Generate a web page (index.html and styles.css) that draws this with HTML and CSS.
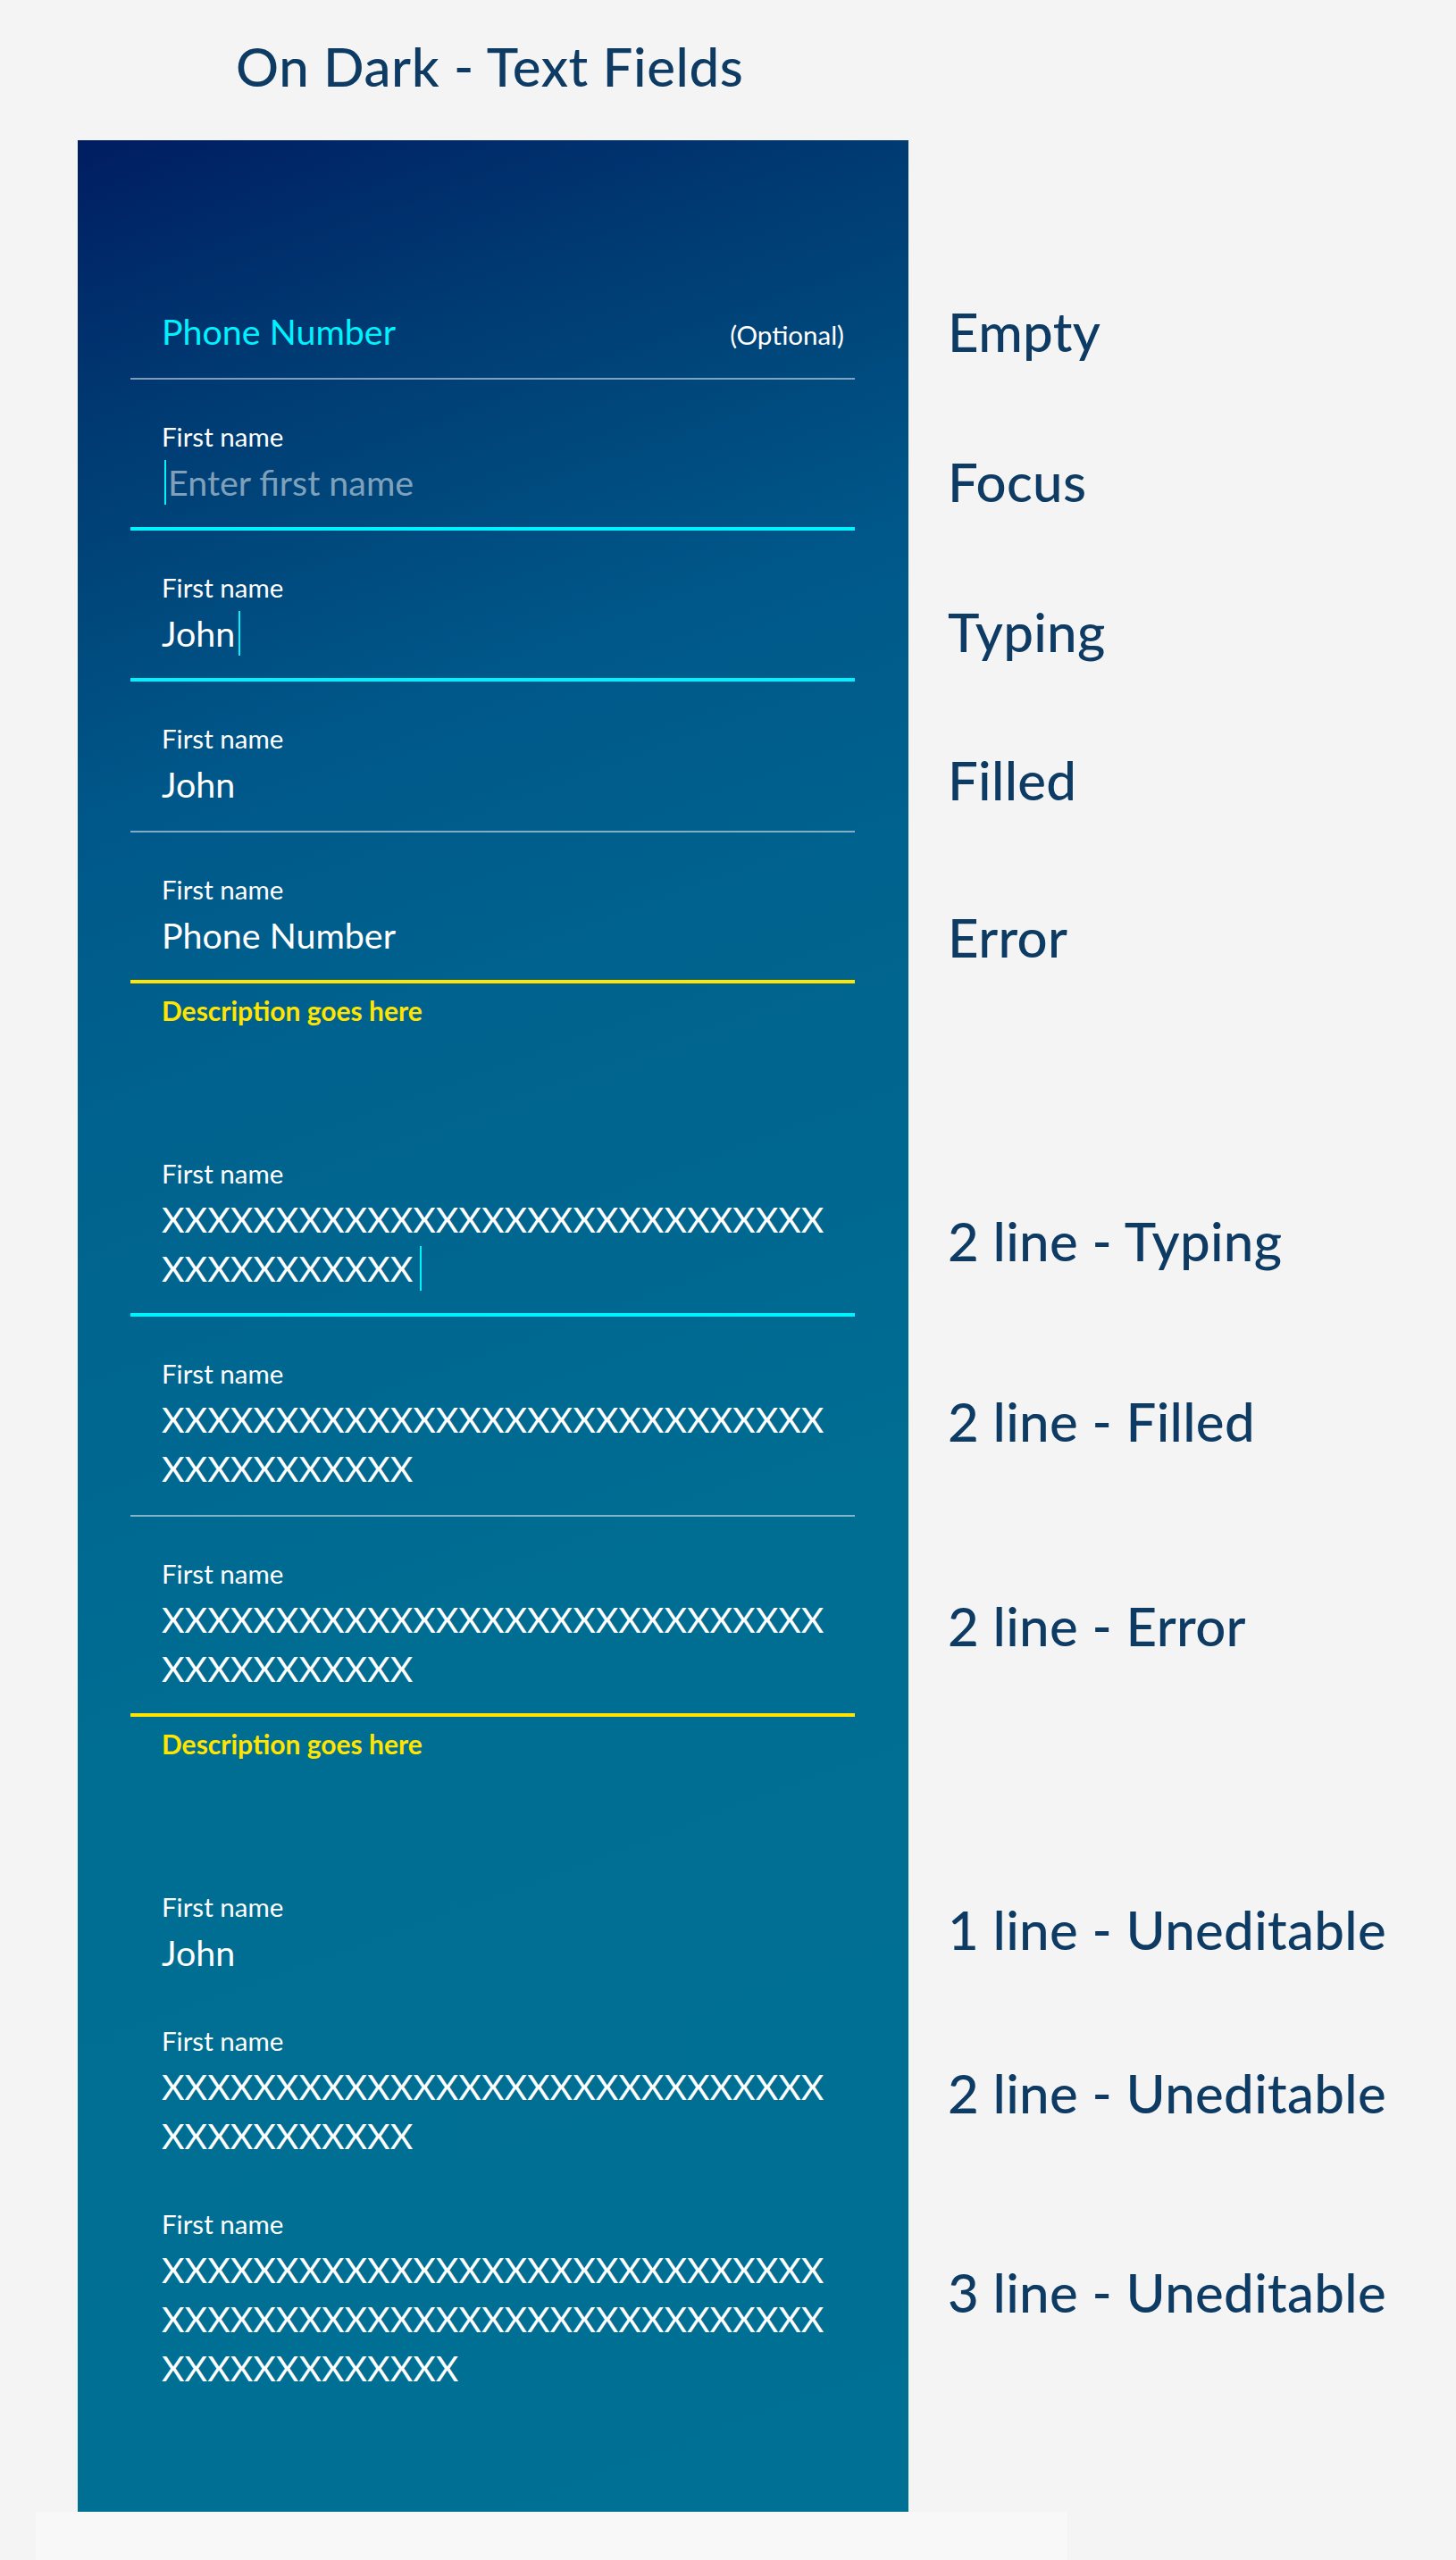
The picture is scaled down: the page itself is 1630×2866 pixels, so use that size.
FILE: index.html
```html
<!DOCTYPE html>
<html lang="en">
<head>
<meta charset="utf-8">
<title>On Dark - Text Fields</title>
<link rel="stylesheet" href="styles.css">
</head>
<body>
<h1 class="title">On Dark - Text Fields</h1>
<div class="board">
  <div class="panel">
    <div class="field field--rest field--empty">
      <div class="field__row">
        <span class="field__value field__value--hint">Phone Number</span>
        <span class="field__optional">(Optional)</span>
      </div>
    </div>

    <div class="field field--active">
      <div class="field__label">First name</div>
      <div class="field__value"><span class="caret caret--lead"></span><span class="field__placeholder">Enter first name</span></div>
    </div>

    <div class="field field--active">
      <div class="field__label">First name</div>
      <div class="field__value">John<span class="caret"></span></div>
    </div>

    <div class="field field--rest">
      <div class="field__label">First name</div>
      <div class="field__value">John</div>
    </div>

    <div class="group">
      <div class="field field--error">
        <div class="field__label">First name</div>
        <div class="field__value">Phone Number</div>
      </div>
      <div class="field__help">Description goes here</div>
    </div>

    <div class="field field--active">
      <div class="field__label">First name</div>
      <div class="field__value">XXXXXXXXXXXXXXXXXXXXXXXXXXXXX<br>XXXXXXXXXXX<span class="caret caret--wide"></span></div>
    </div>

    <div class="field field--rest">
      <div class="field__label">First name</div>
      <div class="field__value">XXXXXXXXXXXXXXXXXXXXXXXXXXXXX<br>XXXXXXXXXXX</div>
    </div>

    <div class="group">
      <div class="field field--error">
        <div class="field__label">First name</div>
        <div class="field__value">XXXXXXXXXXXXXXXXXXXXXXXXXXXXX<br>XXXXXXXXXXX</div>
      </div>
      <div class="field__help">Description goes here</div>
    </div>

    <div class="field field--static">
      <div class="field__label">First name</div>
      <div class="field__value">John</div>
    </div>

    <div class="field field--static">
      <div class="field__label">First name</div>
      <div class="field__value">XXXXXXXXXXXXXXXXXXXXXXXXXXXXX<br>XXXXXXXXXXX</div>
    </div>

    <div class="field field--static">
      <div class="field__label">First name</div>
      <div class="field__value">XXXXXXXXXXXXXXXXXXXXXXXXXXXXX<br>XXXXXXXXXXXXXXXXXXXXXXXXXXXXX<br>XXXXXXXXXXXXX</div>
    </div>
  </div>

  <div class="legend">
    <div class="legend__item legend__item--empty">Empty</div>
    <div class="legend__item legend__item--focus">Focus</div>
    <div class="legend__item legend__item--typing">Typing</div>
    <div class="legend__item legend__item--filled">Filled</div>
    <div class="legend__item legend__item--error">Error</div>
    <div class="legend__item legend__item--typing2">2 line - Typing</div>
    <div class="legend__item legend__item--filled2">2 line - Filled</div>
    <div class="legend__item legend__item--error2">2 line - Error</div>
    <div class="legend__item legend__item--static1">1 line - Uneditable</div>
    <div class="legend__item legend__item--static2">2 line - Uneditable</div>
    <div class="legend__item legend__item--static3">3 line - Uneditable</div>
  </div>
</div>
<div class="sheet-edge"></div>
</body>
</html>
```
FILE: styles.css
```css
html, body {
  margin: 0;
  padding: 0;
}

body {
  background: #f4f4f4;
  font-family: Lato, "Noto Sans", sans-serif;
  color: #0e3b63;
}

.title {
  margin: 0;
  padding: 38px 0 0 264px;
  font-size: 60px;
  line-height: 72px;
  font-weight: 500;
  letter-spacing: 0.6px;
  color: #0e3b63;
}

.board {
  display: flex;
  align-items: flex-start;
  margin-top: 47px;
}

.panel {
  flex: none;
  box-sizing: border-box;
  width: 930px;
  height: 2655px;
  margin-left: 87px;
  padding: 140px 60px 0 59px;
  background: linear-gradient(160deg,
    #001d61 0%,
    #003a73 11%,
    #004277 15%,
    #00588a 26%,
    #00628e 37%,
    #006e93 63%,
    #007094 100%);
  color: #fff;
}

/* ---------- fields ---------- */
.field {
  padding: 46px 0 23px 35px;
  border-bottom: 2px solid rgba(255, 255, 255, 0.5);
}

.field--rest {
  padding-bottom: 25px;
}

.field--active {
  border-bottom: 4px solid #00f2ff;
}

.field--error {
  border-bottom: 4px solid #ffe500;
}

.field--static {
  border-bottom: 0;
  padding-bottom: 8px;
}

.field__row {
  display: flex;
  align-items: baseline;
  justify-content: space-between;
  padding-right: 12px;
}

.field__label {
  font-size: 29.5px;
  line-height: 36px;
  margin-bottom: 5px;
  color: #fff;
}

.field__value {
  font-size: 39.4px;
  line-height: 55px;
  color: #fff;
  white-space: nowrap;
}

.field__value--hint {
  color: #00f2ff;
}

.field__placeholder {
  color: rgba(255, 255, 255, 0.5);
}

.field__optional {
  font-size: 29.5px;
  line-height: 36px;
  color: #fff;
}

.field__help {
  margin: 12px 0 101px;
  padding-left: 35px;
  font-size: 30px;
  line-height: 36px;
  font-weight: 700;
  color: #ffe500;
}

.caret {
  display: inline-block;
  width: 2px;
  height: 50px;
  margin-left: 4px;
  vertical-align: -10px;
  background: #00f2ff;
}

.caret--lead {
  margin-left: 3px;
  margin-right: 2px;
}

.caret--wide {
  margin-left: 8px;
}

/* ---------- legend ---------- */
.legend {
  display: flex;
  flex-direction: column;
  margin-left: 44px;
}

.legend__item {
  font-size: 60px;
  line-height: 72px;
  font-weight: 500;
  letter-spacing: 0.3px;
  white-space: nowrap;
  color: #0e3b63;
}

.legend__item--empty   { margin-top: 178px; }
.legend__item--focus   { margin-top: 96px; }
.legend__item--typing  { margin-top: 96px; }
.legend__item--filled  { margin-top: 94px; }
.legend__item--error   { margin-top: 104px; }
.legend__item--typing2 { margin-top: 268px; }
.legend__item--filled2 { margin-top: 130px; }
.legend__item--error2  { margin-top: 157px; }
.legend__item--static1 { margin-top: 268px; }
.legend__item--static2 { margin-top: 111px; }
.legend__item--static3 { margin-top: 151px; }

.sheet-edge {
  width: 1155px;
  height: 54px;
  margin-left: 40px;
  background: #f8f8f8;
}
```
